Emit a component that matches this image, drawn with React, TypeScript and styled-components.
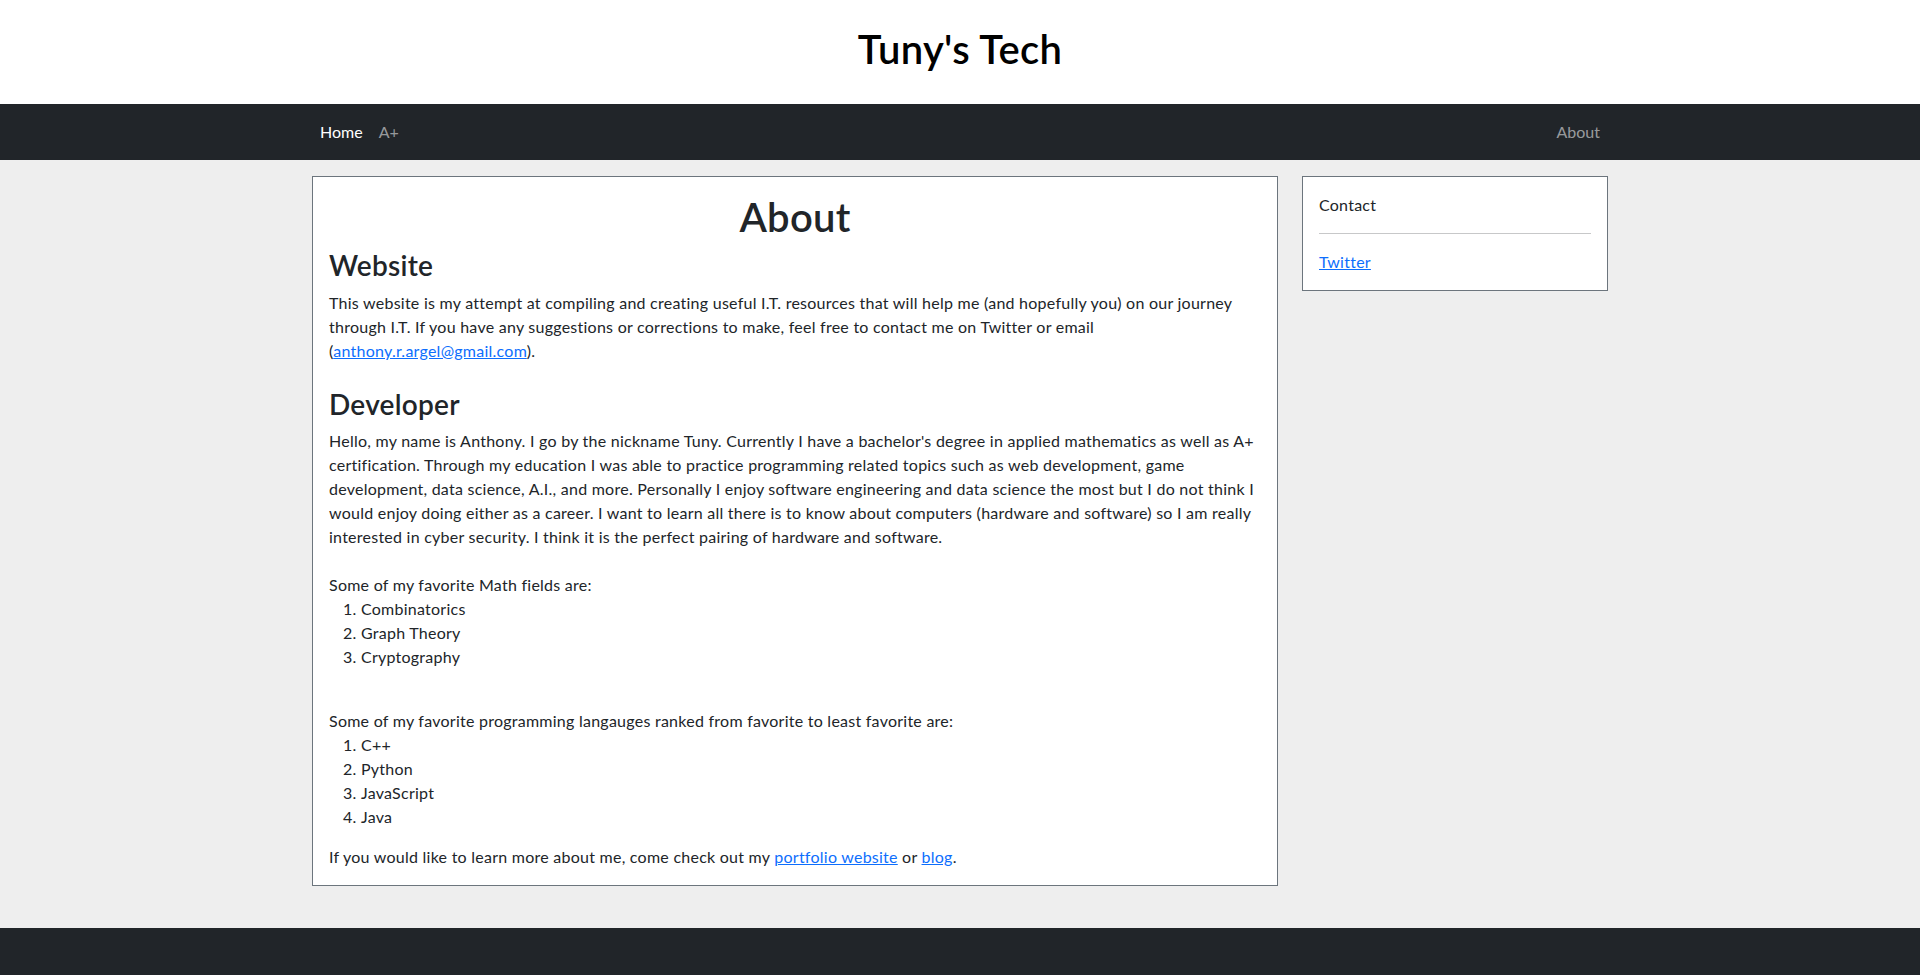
import styled, { createGlobalStyle } from 'styled-components';

const GlobalStyle = createGlobalStyle`
  * {
    box-sizing: border-box;
  }

  body {
    margin: 0;
    font-family: Lato, "Liberation Sans", sans-serif;
    font-size: 16px;
    line-height: 1.5;
    color: #212529;
    background: #fff;
  }
`;

const mathFields = ['Combinatorics', 'Graph Theory', 'Cryptography'];
const languages = ['C++', 'Python', 'JavaScript', 'Java'];

export default function App() {
  return (
    <>
      <GlobalStyle />
      <Header>
        <SiteTitle>Tuny's Tech</SiteTitle>
      </Header>

      <Navbar>
        <NavContainer>
          <NavGroup>
            <NavLink href="#" $active>
              Home
            </NavLink>
            <NavLink href="#">A+</NavLink>
          </NavGroup>
          <NavGroup>
            <NavLink href="#">About</NavLink>
          </NavGroup>
        </NavContainer>
      </Navbar>

      <Main>
        <Row>
          <ContentCard>
            <PageTitle>About</PageTitle>

            <SectionTitle>Website</SectionTitle>
            <Paragraph>
              This website is my attempt at compiling and creating useful I.T. resources that will help me (and
              hopefully you) on our journey through I.T. If you have any suggestions or corrections to make, feel
              free to contact me on Twitter or email (<Link href="#">anthony.r.argel@gmail.com</Link>).
            </Paragraph>

            <SectionTitle $spaced>Developer</SectionTitle>
            <TextBlock>
              Hello, my name is Anthony. I go by the nickname Tuny. Currently I have a bachelor's degree in applied
              mathematics as well as A+ certification. Through my education I was able to practice programming
              related topics such as web development, game development, data science, A.I., and more. Personally I
              enjoy software engineering and data science the most but I do not think I would enjoy doing either as
              a career. I want to learn all there is to know about computers (hardware and software) so I am really
              interested in cyber security. I think it is the perfect pairing of hardware and software.
              <br />
              <br />
              Some of my favorite Math fields are:
              <OrderedList>
                {mathFields.map((field) => (
                  <li key={field}>{field}</li>
                ))}
              </OrderedList>
              <br />
              Some of my favorite programming langauges ranked from favorite to least favorite are:
              <OrderedList>
                {languages.map((lang) => (
                  <li key={lang}>{lang}</li>
                ))}
              </OrderedList>
            </TextBlock>
            <LastParagraph>
              If you would like to learn more about me, come check out my <Link href="#">portfolio website</Link> or{' '}
              <Link href="#">blog</Link>.
            </LastParagraph>
          </ContentCard>

          <SideCard>
            <SideTitle>Contact</SideTitle>
            <Divider />
            <Link href="#">Twitter</Link>
          </SideCard>
        </Row>
      </Main>

      <Footer />
    </>
  );
}

const Header = styled.header`
  background: #fff;
  padding: 25px 0 31px;
  text-align: center;
`;

const SiteTitle = styled.h1`
  margin: 0;
  font-size: 40px;
  font-weight: 600;
  line-height: 48px;
  letter-spacing: 0.3px;
  color: #000;
`;

const Navbar = styled.nav`
  background: #212529;
  padding: 8px 0;
`;

const NavContainer = styled.div`
  width: 1320px;
  margin: 0 auto;
  padding: 0 12px;
  display: flex;
  justify-content: space-between;
  align-items: center;
`;

const NavGroup = styled.div`
  display: flex;
`;

const NavLink = styled.a<{ $active?: boolean }>`
  display: block;
  padding: 8px;
  font-size: 16px;
  line-height: 24px;
  text-decoration: none;
  color: ${(p) => (p.$active ? '#fff' : 'rgba(255, 255, 255, 0.55)')};
`;

const Main = styled.main`
  background: #eee;
  padding: 16px 0 42px;
`;

const Row = styled.div`
  width: 1320px;
  margin: 0 auto;
  padding: 0 12px;
  display: grid;
  grid-template-columns: 966px 306px;
  column-gap: 24px;
  align-items: start;
`;

const Card = styled.div`
  background: #fff;
  border: 1px solid #6c757d;
  padding: 16px;
  letter-spacing: 0.25px;
`;

const ContentCard = styled(Card)``;

const SideCard = styled(Card)``;

const PageTitle = styled.h1`
  margin: 0 0 8px;
  font-size: 40px;
  font-weight: 600;
  line-height: 48px;
  text-align: center;
`;

const SectionTitle = styled.h3<{ $spaced?: boolean }>`
  margin: ${(p) => (p.$spaced ? '25px' : '0')} 0 8px;
  font-size: 28px;
  font-weight: 600;
  line-height: 1.2;
`;

const Paragraph = styled.p`
  margin: 0 0 16px;
`;

const TextBlock = styled.div``;

const LastParagraph = styled.p`
  margin: 0;
`;

const OrderedList = styled.ol`
  margin: 0 0 16px;
  padding-left: 32px;
`;

const Link = styled.a`
  color: #0d6efd;
  text-decoration: underline;
`;

const SideTitle = styled.div``;

const Divider = styled.hr`
  margin: 16px 0;
  border: 0;
  border-top: 1px solid rgba(33, 37, 41, 0.25);
`;

const Footer = styled.footer`
  background: #212529;
  height: 80px;
`;
